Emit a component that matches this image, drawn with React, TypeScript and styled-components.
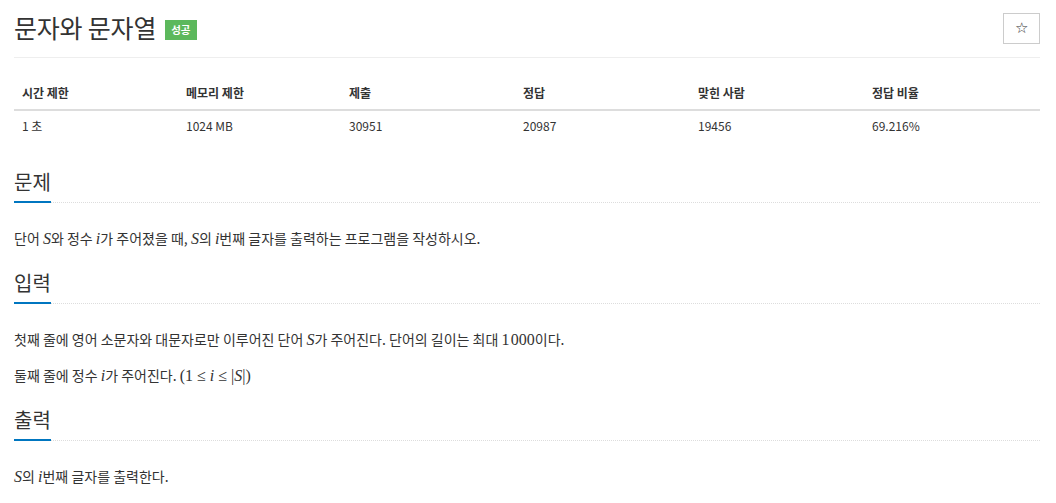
import styled, { createGlobalStyle } from 'styled-components';

const GlobalStyle = createGlobalStyle`
  html, body {
    margin: 0;
    padding: 0;
    background: #fff;
  }
  body {
    font-family: 'Noto Sans CJK KR', 'Noto Sans', sans-serif;
    color: #333;
    font-size: 14px;
  }
`;

const Page = styled.div`
  padding: 0 16px 0 14px;
`;

const TitleBar = styled.div`
  display: flex;
  align-items: center;
  justify-content: space-between;
  padding: 10px 0 13px;
  border-bottom: 1px solid #eee;
`;

const TitleGroup = styled.div`
  display: flex;
  align-items: center;
  gap: 9px;
`;

const Title = styled.h1`
  margin: 0;
  font-size: 25px;
  font-weight: 400;
  line-height: 34px;
  color: #333;
  letter-spacing: -0.2px;
`;

const Badge = styled.span`
  display: inline-block;
  background: #5cb85c;
  color: #fff;
  font-size: 10.5px;
  font-weight: 700;
  line-height: 20px;
  padding: 0 6px;
  margin-top: 5px;
`;

const StarButton = styled.button`
  width: 37px;
  height: 31px;
  border: 1px solid #ccc;
  background: #fff;
  color: #333;
  font-size: 15px;
  padding: 0;
  display: flex;
  align-items: center;
  justify-content: center;
  margin-top: 2px;
`;

const InfoTable = styled.table`
  width: 100%;
  border-collapse: collapse;
  table-layout: fixed;
  margin: 17px 0 23px;
  font-size: 12px;
`;

const Th = styled.th<{ $w: number }>`
  width: ${p => p.$w}px;
  text-align: left;
  font-weight: 700;
  padding: 8px 8px 6px;
  line-height: 20px;
  border-bottom: 2px solid #ddd;
  color: #333;
`;

const Td = styled.td`
  padding: 5px 8px 9px;
  line-height: 20px;
  color: #333;
`;

const Section = styled.section`
  margin-top: 20px;
`;

const Headline = styled.div`
  border-bottom: 1px dotted #ddd;
`;

const SectionTitle = styled.h2`
  display: inline-block;
  margin: 0 0 -1px;
  font-size: 20px;
  font-weight: 400;
  line-height: 28px;
  padding-bottom: 5px;
  border-bottom: 2px solid #0076c0;
  color: #333;
`;

const Para = styled.p`
  margin: 24px 0 0;
  font-size: 14px;
  line-height: 22px;

  & + & {
    margin-top: 14px;
  }
`;

const M = styled.span`
  font-family: 'Liberation Serif', 'DejaVu Serif', serif;
  font-style: italic;
  font-size: 16px;
  line-height: 1;
`;

const N = styled.span`
  font-family: 'Liberation Serif', 'DejaVu Serif', serif;
  font-size: 16px;
  line-height: 1;
`;

const columns = [
  { head: '시간 제한', value: '1 초', w: 148 },
  { head: '메모리 제한', value: '1024 MB', w: 147 },
  { head: '제출', value: '30951', w: 158 },
  { head: '정답', value: '20987', w: 159 },
  { head: '맞힌 사람', value: '19456', w: 158 },
  { head: '정답 비율', value: '69.216%', w: 160 },
];

const App = () => {
  return (
    <Page>
      <GlobalStyle />
      <TitleBar>
        <TitleGroup>
          <Title>문자와 문자열</Title>
          <Badge>성공</Badge>
        </TitleGroup>
        <StarButton aria-label="즐겨찾기">☆</StarButton>
      </TitleBar>

      <InfoTable>
        <thead>
          <tr>
            {columns.map(c => (
              <Th key={c.head} $w={c.w}>
                {c.head}
              </Th>
            ))}
          </tr>
        </thead>
        <tbody>
          <tr>
            {columns.map(c => (
              <Td key={c.head}>{c.value}</Td>
            ))}
          </tr>
        </tbody>
      </InfoTable>

      <Section>
        <Headline>
          <SectionTitle>문제</SectionTitle>
        </Headline>
        <Para>
          단어 <M>S</M>와 정수 <M>i</M>가 주어졌을 때, <M>S</M>의 <M>i</M>번째 글자를
          출력하는 프로그램을 작성하시오.
        </Para>
      </Section>

      <Section>
        <Headline>
          <SectionTitle>입력</SectionTitle>
        </Headline>
        <Para>
          첫째 줄에 영어 소문자와 대문자로만 이루어진 단어 <M>S</M>가 주어진다. 단어의
          길이는 최대 <N>1&#8202;000</N>이다.
        </Para>
        <Para>
          둘째 줄에 정수 <M>i</M>가 주어진다. <N>(1 ≤ </N>
          <M>i</M>
          <N> ≤ |</N>
          <M>S</M>
          <N>|)</N>
        </Para>
      </Section>

      <Section>
        <Headline>
          <SectionTitle>출력</SectionTitle>
        </Headline>
        <Para>
          <M>S</M>의 <M>i</M>번째 글자를 출력한다.
        </Para>
      </Section>
    </Page>
  );
};

export default App;
